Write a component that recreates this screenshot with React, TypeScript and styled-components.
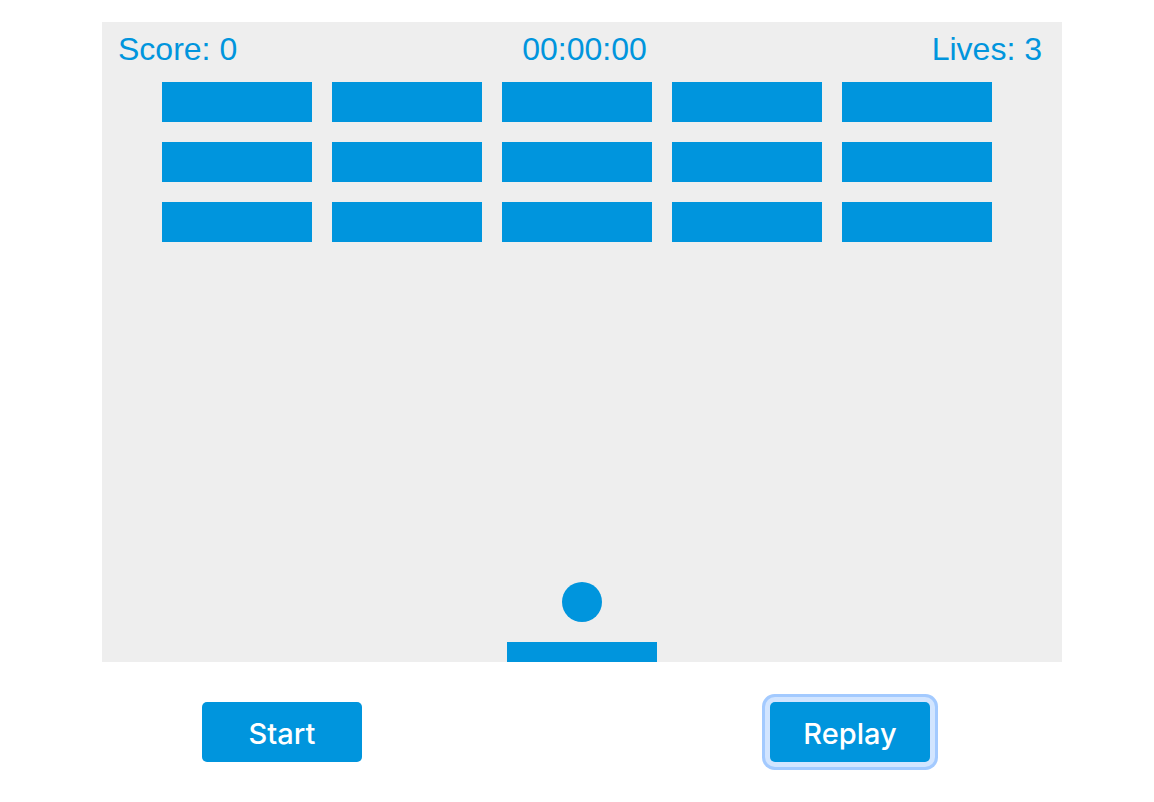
import React from 'react'
import styled, { createGlobalStyle } from 'styled-components'

const GlobalStyle = createGlobalStyle`
  html, body {
    margin: 0;
    padding: 0;
    background: #fff;
  }
`

const BLUE = '#0095dd'

const Page = styled.div`
  padding: 22px 0 40px 102px;
  display: flex;
  flex-direction: column;
`

// game canvas: hud, brick wall, then ball + paddle sitting at the bottom
const Board = styled.div`
  width: 960px;
  height: 640px;
  box-sizing: border-box;
  padding-top: 11px;
  background: #eeeeee;
  display: flex;
  flex-direction: column;
  align-items: center;
`

const Hud = styled.div`
  align-self: stretch;
  display: flex;
  justify-content: space-between;
  padding: 0 20px 0 16px;
  font-family: 'Liberation Sans', Arial, sans-serif;
  font-size: 32px;
  line-height: 32px;
  color: ${BLUE};
  white-space: nowrap;
`

const Bricks = styled.div`
  align-self: flex-start;
  margin: 17px 0 0 60px;
  display: grid;
  grid-template-columns: repeat(5, 150px);
  grid-auto-rows: 40px;
  gap: 20px;
`

const Brick = styled.div`
  background: ${BLUE};
`

const Ball = styled.div`
  margin-top: auto;
  width: 40px;
  height: 40px;
  border-radius: 50%;
  background: ${BLUE};
`

const Paddle = styled.div`
  margin-top: 20px;
  width: 150px;
  height: 20px;
  background: ${BLUE};
`

const Controls = styled.div`
  display: flex;
  margin-top: 40px;
  padding-left: 100px;
  gap: 408px;
`

const Button = styled.button<{ $focused?: boolean }>`
  width: 160px;
  height: 60px;
  padding: 3px 0 0;
  border: none;
  border-radius: 5px;
  background: ${BLUE};
  color: #fff;
  font-family: Inter, 'Open Sans', sans-serif;
  font-weight: 550;
  font-size: 29px;
  cursor: pointer;
  box-shadow: ${(p) => (p.$focused ? '0 0 0 5px #d2e5ff, 0 0 0 8px #a3caff' : 'none')};
`

const rows = [0, 1, 2]
const cols = [0, 1, 2, 3, 4]

export default function App() {
  return (
    <>
      <GlobalStyle />
      <Page>
        <Board>
          <Hud>
            <span>Score: 0</span>
            <span>00:00:00</span>
            <span>Lives: 3</span>
          </Hud>
          <Bricks>
            {rows.map((r) => cols.map((c) => <Brick key={`${r}-${c}`} />))}
          </Bricks>
          <Ball />
          <Paddle />
        </Board>
        <Controls>
          <Button>Start</Button>
          <Button $focused>Replay</Button>
        </Controls>
      </Page>
    </>
  )
}
